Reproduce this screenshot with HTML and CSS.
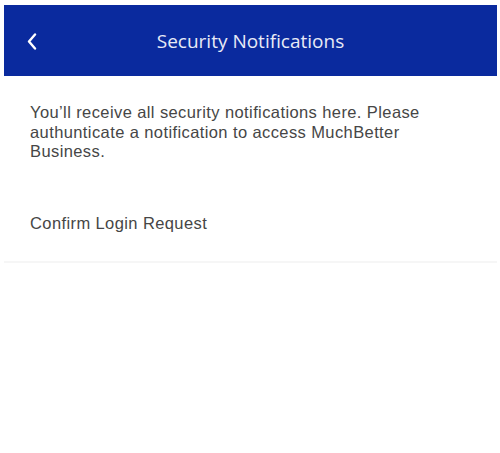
FILE: index.html
```html
<!DOCTYPE html>
<html lang="en">
<head>
  <meta charset="UTF-8">
  <meta name="viewport" content="width=device-width, initial-scale=1">
  <title>Security Notifications</title>
  <link rel="stylesheet" href="styles.css">
</head>
<body>

  <div class="screen">
    <!-- Top bar -->
    <div class="topbar">
      <button class="back" aria-label="Back">
        <svg width="10" height="17" viewBox="0 0 10 17">
          <path d="M8 1.5 L2 8.5 L8 15.5" fill="none" stroke="#fff" stroke-width="2.4" stroke-linecap="round" stroke-linejoin="round"/>
        </svg>
      </button>
      <h1>Security Notifications</h1>
    </div>

    <p class="intro">You’ll receive all security notifications here. Please authunticate a notification to access MuchBetter Business.</p>

    <!-- Notification list -->
    <div class="notice-list">
      <div class="notice">Confirm Login Request</div>
    </div>
  </div>

</body>
</html>
```

FILE: styles.css
```css
body {
  margin: 0;
  background: #fff;
  font-family: 'Liberation Sans', Arial, sans-serif;
}

.screen {
  padding: 5px 3px 0 4px;
}

.topbar {
  position: relative;
  height: 71px;
  background: #0a2a9e;
  display: flex;
  align-items: center;
  justify-content: center;
}

.topbar h1 {
  margin: 0;
  font-family: 'Open Sans', sans-serif;
  font-weight: 400;
  font-size: 19px;
  color: #e8eaf6;
}

.back {
  position: absolute;
  left: 23px;
  top: 28px;
  background: none;
  border: 0;
  padding: 0;
  cursor: pointer;
}

.intro {
  margin: 27px 0 0;
  padding: 0 26px;
  font-size: 16.5px;
  letter-spacing: 0.4px;
  line-height: 19.5px;
  color: #464646;
}

.notice-list {
  margin-top: 52px;
}

.notice {
  padding: 0 26px 28px;
  font-size: 16.5px;
  letter-spacing: 0.4px;
  line-height: 19px;
  color: #464646;
  border-bottom: 2px solid #f6f6f6;
}
```
